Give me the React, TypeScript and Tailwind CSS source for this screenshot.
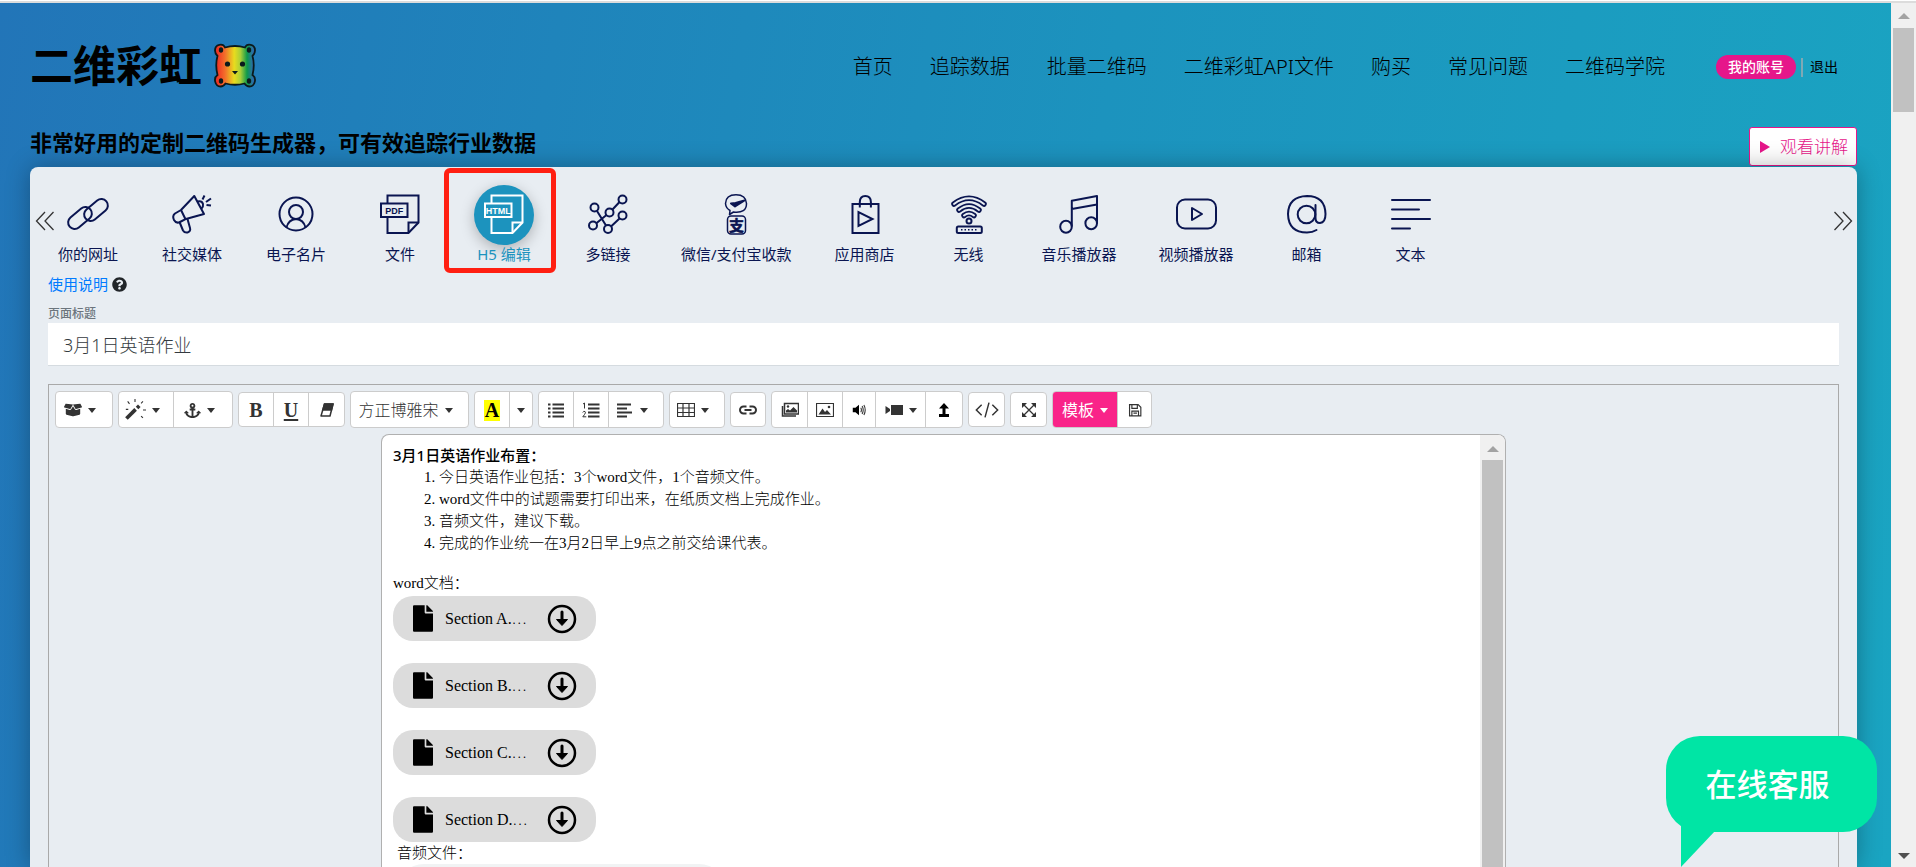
import { useState, type ReactNode } from "react";
import { FaAnchor, FaBoxOpen, FaFile, FaQuestionCircle } from "react-icons/fa";

const NAV_LINKS = ["首页", "追踪数据", "批量二维码", "二维彩虹API文件", "购买", "常见问题", "二维码学院"];

const HOMEWORK = [
  "今日英语作业包括：3个word文件，1个音频文件。",
  "word文件中的试题需要打印出来，在纸质文档上完成作业。",
  "音频文件，建议下载。",
  "完成的作业统一在3月2日早上9点之前交给课代表。",
];

const FILES = ["Section A.", "Section B.", "Section C.", "Section D."];

function TabIcon({ children }: { children: ReactNode }) {
  return (
    <svg
      className="w-[60px] h-[60px]"
      viewBox="0 0 60 60"
      fill="none"
      stroke="currentColor"
      strokeWidth="2"
      strokeLinejoin="round"
      aria-hidden="true"
    >
      {children}
    </svg>
  );
}

function FileShape({ label }: { label: string }) {
  return (
    <g strokeLinejoin="miter">
      <path d="M17.5 18V10.5H48.5V37.5L38.5 48H17.5V32" />
      <path d="M38.5 48V37.5H48.5" />
      <rect x="11" y="18.5" width="26.5" height="13.5" />
      <text
        x="24.3"
        y="28.6"
        textAnchor="middle"
        fill="currentColor"
        stroke="none"
        className="font-['Liberation_Sans'] font-bold text-[9px]"
      >
        {label}
      </text>
    </g>
  );
}

const TABS: { label: string; icon: ReactNode; active?: boolean }[] = [
  {
    label: "你的网址",
    icon: (
      <>
        <rect x="8.5" y="26.5" width="27" height="13" rx="6.5" transform="rotate(-40 22 33)" />
        <rect x="24.5" y="18.5" width="27" height="13" rx="6.5" transform="rotate(-40 38 25)" />
      </>
    ),
  },
  {
    label: "社交媒体",
    icon: (
      <>
        <path d="M32.3 11 19 25 13 28.5Q10 31 12 35 14.3 39 18 37L23 34.3 42 29Z" />
        <path d="M19 25 23.5 34.3M17.5 37 21 45.5Q22.5 48 25.5 47.5 29 46.5 28 43L25.5 34" />
        <path d="M35.5 16.5Q40 15.5 41 19 41.5 21.5 39.5 23.5M40.5 14.5 42.5 10.5M44 17 49 13.5M44.5 20 49 20.5" />
      </>
    ),
  },
  {
    label: "电子名片",
    icon: (
      <>
        <circle cx="30" cy="29" r="16.5" />
        <circle cx="30" cy="27" r="7" />
        <path d="M20.5 42.5Q22.5 34.5 30 34 37.5 34.5 39.5 42.5" />
      </>
    ),
  },
  { label: "文件", icon: <FileShape label="PDF" /> },
  { label: "H5 编辑", icon: <FileShape label="HTML" />, active: true },
  {
    label: "多链接",
    icon: (
      <>
        <path d="M18 38.5 28.5 30M34.5 24.5 41.5 17M19 26 28 40.5M33 41.5 41.5 33.5" />
        <circle cx="16.5" cy="22.5" r="4" />
        <circle cx="44.5" cy="14.5" r="4" />
        <circle cx="31.5" cy="27.5" r="4" />
        <circle cx="44.5" cy="30.5" r="4" />
        <circle cx="15" cy="40.5" r="4" />
        <circle cx="30" cy="44" r="4" />
      </>
    ),
  },
  {
    label: "微信/支付宝收款",
    icon: (
      <>
        <path
          d="M24 25.5 23.5 29.5 27.5 27Q40.5 28.5 40.5 18.5 40 9.7 30 9.7 19.8 9.7 19.5 18.5 19.8 23 24 25.5Z"
          strokeWidth="1.5"
        />
        <path d="M25 18.5 29 21.5 38.5 15.5 29.5 18Z" fill="currentColor" />
        <rect x="21.5" y="31" width="18" height="18" rx="3.5" strokeWidth="1.5" />
        <text
          x="30.5"
          y="45.5"
          textAnchor="middle"
          fill="currentColor"
          strokeWidth="0.6"
          className="font-['Noto_Sans_CJK_SC',sans-serif] font-bold text-[15px]"
        >
          支
        </text>
      </>
    ),
  },
  {
    label: "应用商店",
    icon: (
      <g strokeLinejoin="miter">
        <rect x="17.5" y="19" width="26" height="29" />
        <path d="M24.8 22.5V17Q25 11 30.3 11 35.7 11 35.9 17V22.5" />
        <path d="M23.5 27V41L37.5 34Z" />
      </g>
    ),
  },
  {
    label: "无线",
    icon: (
      <>
        <g strokeWidth="5.5" strokeLinecap="round">
          <path d="M15 19Q30 7.5 45 19" />
          <path d="M20 25Q30 17 40 25" />
          <path d="M25 30.5Q30 26.5 35 30.5" />
        </g>
        <g stroke="#e8edf2" strokeWidth="2" strokeLinecap="round">
          <path d="M15 19Q30 7.5 45 19" />
          <path d="M20 25Q30 17 40 25" />
          <path d="M25 30.5Q30 26.5 35 30.5" />
        </g>
        <circle cx="30" cy="36" r="2.5" />
        <rect x="17.8" y="41.5" width="25" height="6.5" rx="1.5" />
        <path d="M22 44.8H39" strokeDasharray="1.5 2" strokeWidth="1.5" />
      </>
    ),
  },
  {
    label: "音乐播放器",
    icon: (
      <>
        <path d="M22.8 41.5V15.7L48 11V38.5M22.8 24 48 19.5" />
        <ellipse cx="17" cy="41.7" rx="5.8" ry="6" />
        <ellipse cx="42.2" cy="38.3" rx="5.8" ry="6" />
      </>
    ),
  },
  {
    label: "视频播放器",
    icon: (
      <>
        <rect x="11" y="14.5" width="39" height="29" rx="8" />
        <path d="M26 23V35L36 29Z" />
      </>
    ),
  },
  {
    label: "邮箱",
    icon: (
      <>
        <circle cx="29.5" cy="29.5" r="8.8" />
        <path
          d="M38.5 20V33Q38.5 38 43 38 48.5 37.5 48.5 29 48 11 30 11 11.500 11.500 11 29 11.500 47.500 30 47.500 35.500 47.500 39.500 45"
          strokeLinecap="round"
        />
      </>
    ),
  },
  {
    label: "文本",
    icon: <path d="M11 15H49M11 24.5H38M11 34H49M11 43.5H29" strokeLinecap="round" />,
  },
];

function Bear() {
  return (
    <svg className="w-[42px] h-[45px]" viewBox="0 0 42 45" aria-hidden="true">
      <defs>
        <linearGradient id="rainbow" x1="0" x2="1">
          <stop offset="0.05" stopColor="#ee3124" />
          <stop offset="0.25" stopColor="#f36f2b" />
          <stop offset="0.48" stopColor="#e8dc1e" />
          <stop offset="0.64" stopColor="#a8cf38" />
          <stop offset="0.8" stopColor="#0f9a4a" />
          <stop offset="0.95" stopColor="#2c6cae" />
        </linearGradient>
      </defs>
      <path
        d="M11 4.500Q21 1.500 31 4.500C33 0 41 1 41 7.500 41 10.500 39.500 12 38.500 13Q41 22 38.500 32C43 35 41 43.500 35.500 43.500 33 43.500 31.500 42 30.500 40.500Q21 43 11.500 40.500C10.500 42 9 43.500 6.500 43.500 1 43.500-1 35 3.500 32Q1 22 3.500 13C2.500 12 1 10.500 1 7.500 1 1 9 0 11 4.500Z"
        fill="url(#rainbow)"
        stroke="#0b1a1c"
        strokeWidth="1.8"
      />
      <g fill="#0b1a1c">
        <ellipse cx="7" cy="7" rx="2.2" ry="2.8" />
        <ellipse cx="35" cy="7" rx="2.2" ry="2.8" />
        <ellipse cx="7" cy="38" rx="2.2" ry="2.8" />
        <ellipse cx="35" cy="38" rx="2.2" ry="2.8" />
        <circle cx="13.5" cy="21" r="2.6" />
        <circle cx="28.5" cy="21" r="2.6" />
        <path d="M18 28H24L21 31.5Z" />
      </g>
    </svg>
  );
}

function Caret({ spaced }: { spaced?: boolean }) {
  return (
    <span className={`border-x-4 border-t-[5px] border-x-transparent border-t-current ${spaced ? "mr-2" : ""}`} />
  );
}

function ScrollTrack({ children }: { children: ReactNode }) {
  return <div className="flex w-[25px] shrink-0 flex-col items-center bg-[#f0f0f0]">{children}</div>;
}

// Toolbar group: a row of joined buttons inside one rounded border
function Group({ children, compact }: { children: ReactNode; compact?: boolean }) {
  return (
    <div
      className={`flex divide-x divide-[#ccc] overflow-hidden rounded border border-[#ccc] bg-white ${
        compact ? "h-[35px]" : "h-[37px]"
      }`}
    >
      {children}
    </div>
  );
}

function Tool({ label, width, children, pink }: { label: string; width: string; children: ReactNode; pink?: boolean }) {
  return (
    <button
      type="button"
      aria-label={label}
      className={`flex h-full items-center justify-center gap-[6px] pt-px ${width} ${
        pink ? "bg-[#f92489] text-white" : "text-[#333]"
      }`}
    >
      {children}
    </button>
  );
}

function Glyph({ children, size = "w-[18px] h-[18px]" }: { children: ReactNode; size?: string }) {
  return (
    <svg className={size} viewBox="0 0 18 18" fill="none" stroke="currentColor" strokeWidth="1.5" aria-hidden="true">
      {children}
    </svg>
  );
}

function Toolbar() {
  return (
    <div className="flex flex-wrap items-center gap-[5px] p-[6px]">
      <Group>
        <Tool label="组件" width="w-[56px]">
          <FaBoxOpen className="h-[18px] w-[18px]" />
          <Caret spaced />
        </Tool>
      </Group>
      <Group>
        <Tool label="样式" width="w-[55px]">
          <Glyph size="w-[22px] h-[22px]">
            <path d="M2 16 9.5 8.5" strokeWidth="3" />
            <path d="M10.7 7.3 12.5 5.5" strokeWidth="3" />
            <path d="M9 0V2.5M3 2 4.5 4M15.5 2 14 3.5M15.5 9H18M14 14 15.5 15.5M1.5 8.5H3.5" strokeWidth="0.9" />
          </Glyph>
          <Caret spaced />
        </Tool>
        <Tool label="锚点" width="w-[58px]">
          <FaAnchor className="h-[17px] w-[17px]" />
          <Caret spaced />
        </Tool>
      </Group>
      <Group compact>
        <Tool label="粗体" width="w-[35px]">
          <span className="font-['Liberation_Serif',serif] text-xl font-bold">B</span>
        </Tool>
        <Tool label="下划线" width="w-[35px]">
          <span className="font-['Liberation_Serif',serif] text-xl font-bold underline underline-offset-2">U</span>
        </Tool>
        <Tool label="清除格式" width="w-[35px]">
          <Glyph>
            <path d="M6.5 3H15L12 15H3Z" strokeLinejoin="round" />
            <path d="M6.5 3H15L13.5 9H4.800Z" fill="currentColor" />
          </Glyph>
        </Tool>
      </Group>
      <Group>
        <Tool label="字体" width="w-[117px]">
          <span className="text-base font-light">方正博雅宋</span>
          <Caret spaced />
        </Tool>
      </Group>
      <Group>
        <Tool label="文字颜色" width="w-[35px]">
          <span className="bg-[#ff0] px-px font-['Liberation_Serif',serif] text-xl leading-[21px] font-bold text-black">A</span>
        </Tool>
        <Tool label="更多颜色" width="w-[22px]">
          <Caret />
        </Tool>
      </Group>
      <Group>
        <Tool label="无序列表" width="w-[35px]">
          <Glyph>
            <path d="M5.5 3.5H17M5.5 7.5H17M5.5 11.5H17M5.5 15.5H17" strokeWidth="2" />
            <path d="M1 3.5H3.5M1 7.5H3.5M1 11.5H3.5M1 15.5H3.5" strokeWidth="2" />
          </Glyph>
        </Tool>
        <Tool label="有序列表" width="w-[35px]">
          <Glyph>
            <path d="M6 3.5H17.5M6 7.5H17.5M6 11.5H17.5M6 15.5H17.5" strokeWidth="2" />
            <path d="M1 3 2.5 2V7.5M0.8 11.5Q1.5 9.8 3 10.5 4.2 11.5 2.5 13.5L0.8 15.8H4.3" strokeWidth="1" />
          </Glyph>
        </Tool>
        <Tool label="对齐方式" width="w-[54px]">
          <Glyph>
            <path d="M1 3.5H15M1 7.5H11M1 11.5H16M1 15.5H11" strokeWidth="2" />
          </Glyph>
          <Caret spaced />
        </Tool>
      </Group>
      <Group>
        <Tool label="表格" width="w-[54px]">
          <Glyph>
            <path
              d="M0.5 2.5H17.5V15.5H0.5ZM0.5 7H17.5M0.5 11.5H17.5M6 2.5V15.5M12 2.5V15.5"
              strokeWidth="1.2"
            />
          </Glyph>
          <Caret spaced />
        </Tool>
      </Group>
      <Group compact>
        <Tool label="插入链接" width="w-[34px]">
          <Glyph>
            <path
              d="M7.5 12.5H4.5A3.5 3.5 0 0 1 4.5 5.5H7.5M10.5 5.5H13.5A3.5 3.5 0 0 1 13.5 12.5H10.5M5.5 9H12.5"
              strokeWidth="2"
            />
          </Glyph>
        </Tool>
      </Group>
      <Group>
        <Tool label="图库" width="w-[36px]">
          <Glyph>
            <path d="M3.5 2.5H17.5V13H3.5ZM1.5 5V15H15" />
            <path d="M5 11.5V9.5L7 8 9 9.5 12.5 6 16 9.5V11.5Z" fill="currentColor" stroke="none" />
            <circle cx="7" cy="5.5" r="1.2" fill="currentColor" stroke="none" />
          </Glyph>
        </Tool>
        <Tool label="插入图片" width="w-[35px]">
          <Glyph>
            <path d="M0.5 2.5H17.5V15.5H0.5Z" strokeWidth="1.2" />
            <path d="M2.5 13.5 6.5 7.5 9 11 11 9 15 13.5Z" fill="currentColor" stroke="none" />
            <circle cx="13" cy="6" r="1.3" fill="currentColor" stroke="none" />
          </Glyph>
        </Tool>
        <Tool label="插入音频" width="w-[33px]">
          <Glyph size="w-[16px] h-[16px]">
            <path d="M2 6.5H5L9 3V15L5 11.5H2Z" fill="#000" stroke="none" />
            <path d="M11 6.5Q12.5 9 11 11.5M12.5 4.5Q15 9 12.5 13.5M14.5 3.5Q17.5 9 14.5 14.5" strokeWidth="1.2" />
          </Glyph>
        </Tool>
        <Tool label="插入视频" width="w-[50px]">
          <Glyph>
            <path d="M6 4H18V14H6Z" fill="currentColor" stroke="none" />
            <path d="M0.5 5 5 8V10L0.5 13Z" fill="currentColor" stroke="none" />
          </Glyph>
          <Caret />
        </Tool>
        <Tool label="上传文件" width="w-[36px]">
          <Glyph>
            <path d="M9 2 14 7.5H10.5V13H14V16H4V13H7.5V7.5H4Z" fill="#000" stroke="none" />
          </Glyph>
        </Tool>
      </Group>
      <Group compact>
        <Tool label="源代码" width="w-[35px]">
          <Glyph size="w-[24px] h-[24px]">
            <path d="M5 5 1 9 5 13M13 5 17 9 13 13M10.5 3.5 7.5 14.5" strokeWidth="1.1" />
          </Glyph>
        </Tool>
      </Group>
      <Group compact>
        <Tool label="全屏" width="w-[35px]">
          <Glyph>
            <path d="M3 3 15 15M15 3 3 15" strokeWidth="1.3" />
            <path d="M2 2H7L2 7ZM16 2V7L11 2ZM2 16V11L7 16ZM16 16H11L16 11Z" fill="currentColor" stroke="none" />
          </Glyph>
        </Tool>
      </Group>
      <Group>
        <Tool label="模板" width="w-[65px]" pink>
          <span className="text-base">模板</span>
          <Caret />
        </Tool>
        <Tool label="保存" width="w-[33px]">
          <Glyph size="w-[14px] h-[14px]">
            <path d="M2 2H13L16.5 5.5V16.5H2ZM5 2V7H12V2M5 16V10.5H13.5V16M7 13H11.5" />
          </Glyph>
        </Tool>
      </Group>
    </div>
  );
}

function DownloadPill({ name }: { name: string }) {
  return (
    <li className="flex h-[45px] w-[203px] items-center rounded-[20px] bg-[#dcdcdc] pl-5">
      <FaFile className="h-[27px] w-5 text-black" />
      <span className="ml-3 w-[102px] font-['Liberation_Serif',serif] text-base leading-5">
        {name}
        <span className="font-['Noto_Sans_CJK_SC',sans-serif] text-sm leading-5">⋯</span>
      </span>
      <button type="button" aria-label={`下载 ${name}`}>
        <svg className="h-[30px] w-[30px]" viewBox="0 0 30 30" fill="none" stroke="#000" aria-hidden="true">
          <circle cx="15" cy="15" r="13" strokeWidth="2.5" />
          <path d="M15 8V16" strokeWidth="3" strokeLinecap="round" />
          <path d="M9.5 15.5H20.5L15 21.5Z" fill="#000" strokeWidth="1" strokeLinejoin="round" />
        </svg>
      </button>
    </li>
  );
}

function DocumentArea() {
  return (
    <div className="mx-auto flex w-full max-w-[1125px] flex-1 overflow-hidden rounded-t-lg border border-b-0 border-[#b0b0b0] bg-white">
      <div className="flex-1 px-[11px] pt-[9px] font-['Liberation_Serif','Noto_Sans_CJK_SC',serif] text-[15px] leading-[22px] font-light text-black">
        <p className="font-['Noto_Sans','Noto_Sans_CJK_SC',sans-serif] font-medium">3月1日英语作业布置：</p>
        <ol className="list-decimal pl-[46px]">
          {HOMEWORK.map((line) => (
            <li key={line}>{line}</li>
          ))}
        </ol>
        <p className="mt-[18px]">word文档：</p>
        <ul className="mt-[2px] space-y-[22px]">
          {FILES.map((name) => (
            <DownloadPill key={name} name={name} />
          ))}
        </ul>
        <p className="pl-1">音频文件：</p>
        <div className="ml-1 h-[54px] w-[329px] rounded-full bg-[#f1f3f4]" />
      </div>
      <ScrollTrack>
        <span className="mt-[11px] border-x-[6px] border-b-[6px] border-x-transparent border-b-[#a3a3a3]" />
        <span className="mt-2 w-[21px] flex-1 bg-[#c1c1c1]" />
      </ScrollTrack>
    </div>
  );
}

export default function App() {
  const [title, setTitle] = useState("3月1日英语作业");

  return (
    <div className="flex h-screen flex-col overflow-hidden border-t border-white font-['Noto_Sans','Noto_Sans_CJK_SC',sans-serif]">
      <div className="h-[2px] shrink-0 bg-[#dcdcdc]" />
      <div className="flex min-h-0 flex-1">
        <div className="relative flex min-w-0 flex-1 flex-col overflow-hidden bg-[linear-gradient(100deg,#2275b8,#1c93be_55%,#1aa5c2)] pr-[34px] pl-[30px]">
          <header className="flex h-[124px] shrink-0 items-center justify-between pr-[19px]">
            <a href="#" className="flex items-center gap-3 text-[43px] font-bold text-black">
              <span className="leading-none">二维彩虹</span>
              <Bear />
            </a>
            <div className="flex items-center pt-1">
              <nav className="flex gap-[37px] text-xl font-light text-black">
                {NAV_LINKS.map((text) => (
                  <a key={text} href="#">
                    {text}
                  </a>
                ))}
              </nav>
              <a href="#" className="ml-[51px] rounded-full bg-[#e6168a] px-3 text-sm leading-6 font-medium text-white">
                我的账号
              </a>
              <span className="ml-[5px] h-[19px] w-[2px] bg-[#7fa9b5]" />
              <a href="#" className="ml-[7px] text-sm text-black">
                退出
              </a>
            </div>
          </header>

          <div className="flex h-10 shrink-0 items-start justify-between">
            <h1 className="text-[22px] leading-[30px] font-bold text-black">
              非常好用的定制二维码生成器，可有效追踪行业数据
            </h1>
            <button
              type="button"
              className="flex h-[39px] w-[108px] items-center gap-[10px] rounded-[3px] border border-[#e6168a] bg-white pl-[10px] text-[17px] font-light text-[#e6168a]"
            >
              <span className="border-y-[6px] border-l-[10px] border-y-transparent border-l-current" />
              观看讲解
            </button>
          </div>

          <main className="relative flex min-h-0 flex-1 flex-col rounded-t-lg bg-[#e8edf2] px-[18px] pt-[18px] shadow-[0_0_24px_rgba(0,0,0,0.3)]">
            <button type="button" aria-label="上一页" className="absolute top-[44px] left-[5px]">
              <svg className="h-5 w-5" viewBox="0 0 20 20" fill="none" stroke="#333" strokeWidth="1.3">
                <path d="M10 1 1.5 10 10 19M18.5 1 10 10 18.5 19" />
              </svg>
            </button>
            <button type="button" aria-label="下一页" className="absolute top-[44px] right-[4px]">
              <svg className="h-5 w-5" viewBox="0 0 20 20" fill="none" stroke="#333" strokeWidth="1.3">
                <path d="M1.5 1 10 10 1.5 19M10 1 18.5 10 10 19" />
              </svg>
            </button>

            <div className="-ml-3 flex shrink-0">
              {TABS.map((tab) => (
                <button
                  key={tab.label}
                  type="button"
                  className={`relative flex min-w-[104px] shrink-0 flex-col items-center px-[21px] ${
                    tab.active ? "text-[#1c93be]" : "text-[#0a1551]"
                  }`}
                >
                  <span
                    className={
                      tab.active ? "rounded-full bg-[#1c93be] text-white shadow-[0_4px_14px_rgba(0,0,0,0.25)]" : ""
                    }
                  >
                    <TabIcon>{tab.icon}</TabIcon>
                  </span>
                  <span className="text-[15px] leading-[18px] whitespace-nowrap">{tab.label}</span>
                  {tab.active && (
                    <span className="absolute -top-[17px] right-0 -bottom-[10px] -left-2 rounded-md border-[5px] border-[#ff1f12]" />
                  )}
                </button>
              ))}
            </div>

            <a href="#" className="mt-[9px] flex shrink-0 items-center gap-1 text-[15px] leading-6 text-[#007bff]">
              使用说明
              <FaQuestionCircle className="h-[15px] w-[15px] text-[#212529]" />
            </a>
            <label htmlFor="page-title" className="mt-[9px] shrink-0 text-xs leading-[18px] font-medium text-[#6c757d]">
              页面标题
            </label>
            <input
              id="page-title"
              type="text"
              value={title}
              onChange={(e) => setTitle(e.target.value)}
              className="h-[43px] w-full shrink-0 border-b border-[#d5dbe0] bg-white px-[15px] text-lg font-light text-[#343a40] outline-none"
            />

            <section className="mt-[18px] flex min-h-0 flex-1 flex-col border border-b-0 border-[#a9a9a9]">
              <Toolbar />
              <DocumentArea />
            </section>
          </main>

          {/* Floating support bubble */}
          <button
            type="button"
            className="absolute right-[14px] bottom-0 h-[131px] w-[211px] text-[31px] font-medium text-white"
          >
            <svg className="absolute inset-0 h-full w-full" viewBox="0 0 211 131" fill="#00e5a5" aria-hidden="true">
              <rect width="211" height="96" rx="34" />
              <path d="M15 80V131L49 95Z" />
            </svg>
            <span className="relative block pr-2 pb-[34px] leading-none">在线客服</span>
          </button>
        </div>

        <ScrollTrack>
          <span className="mt-[10px] border-x-[6px] border-b-[6px] border-x-transparent border-b-[#a3a3a3]" />
          <span className="mt-[9px] h-[84px] w-[21px] bg-[#c1c1c1]" />
          <span className="mt-auto mb-2 border-x-[6px] border-t-[6px] border-x-transparent border-t-[#505050]" />
        </ScrollTrack>
      </div>
    </div>
  );
}
